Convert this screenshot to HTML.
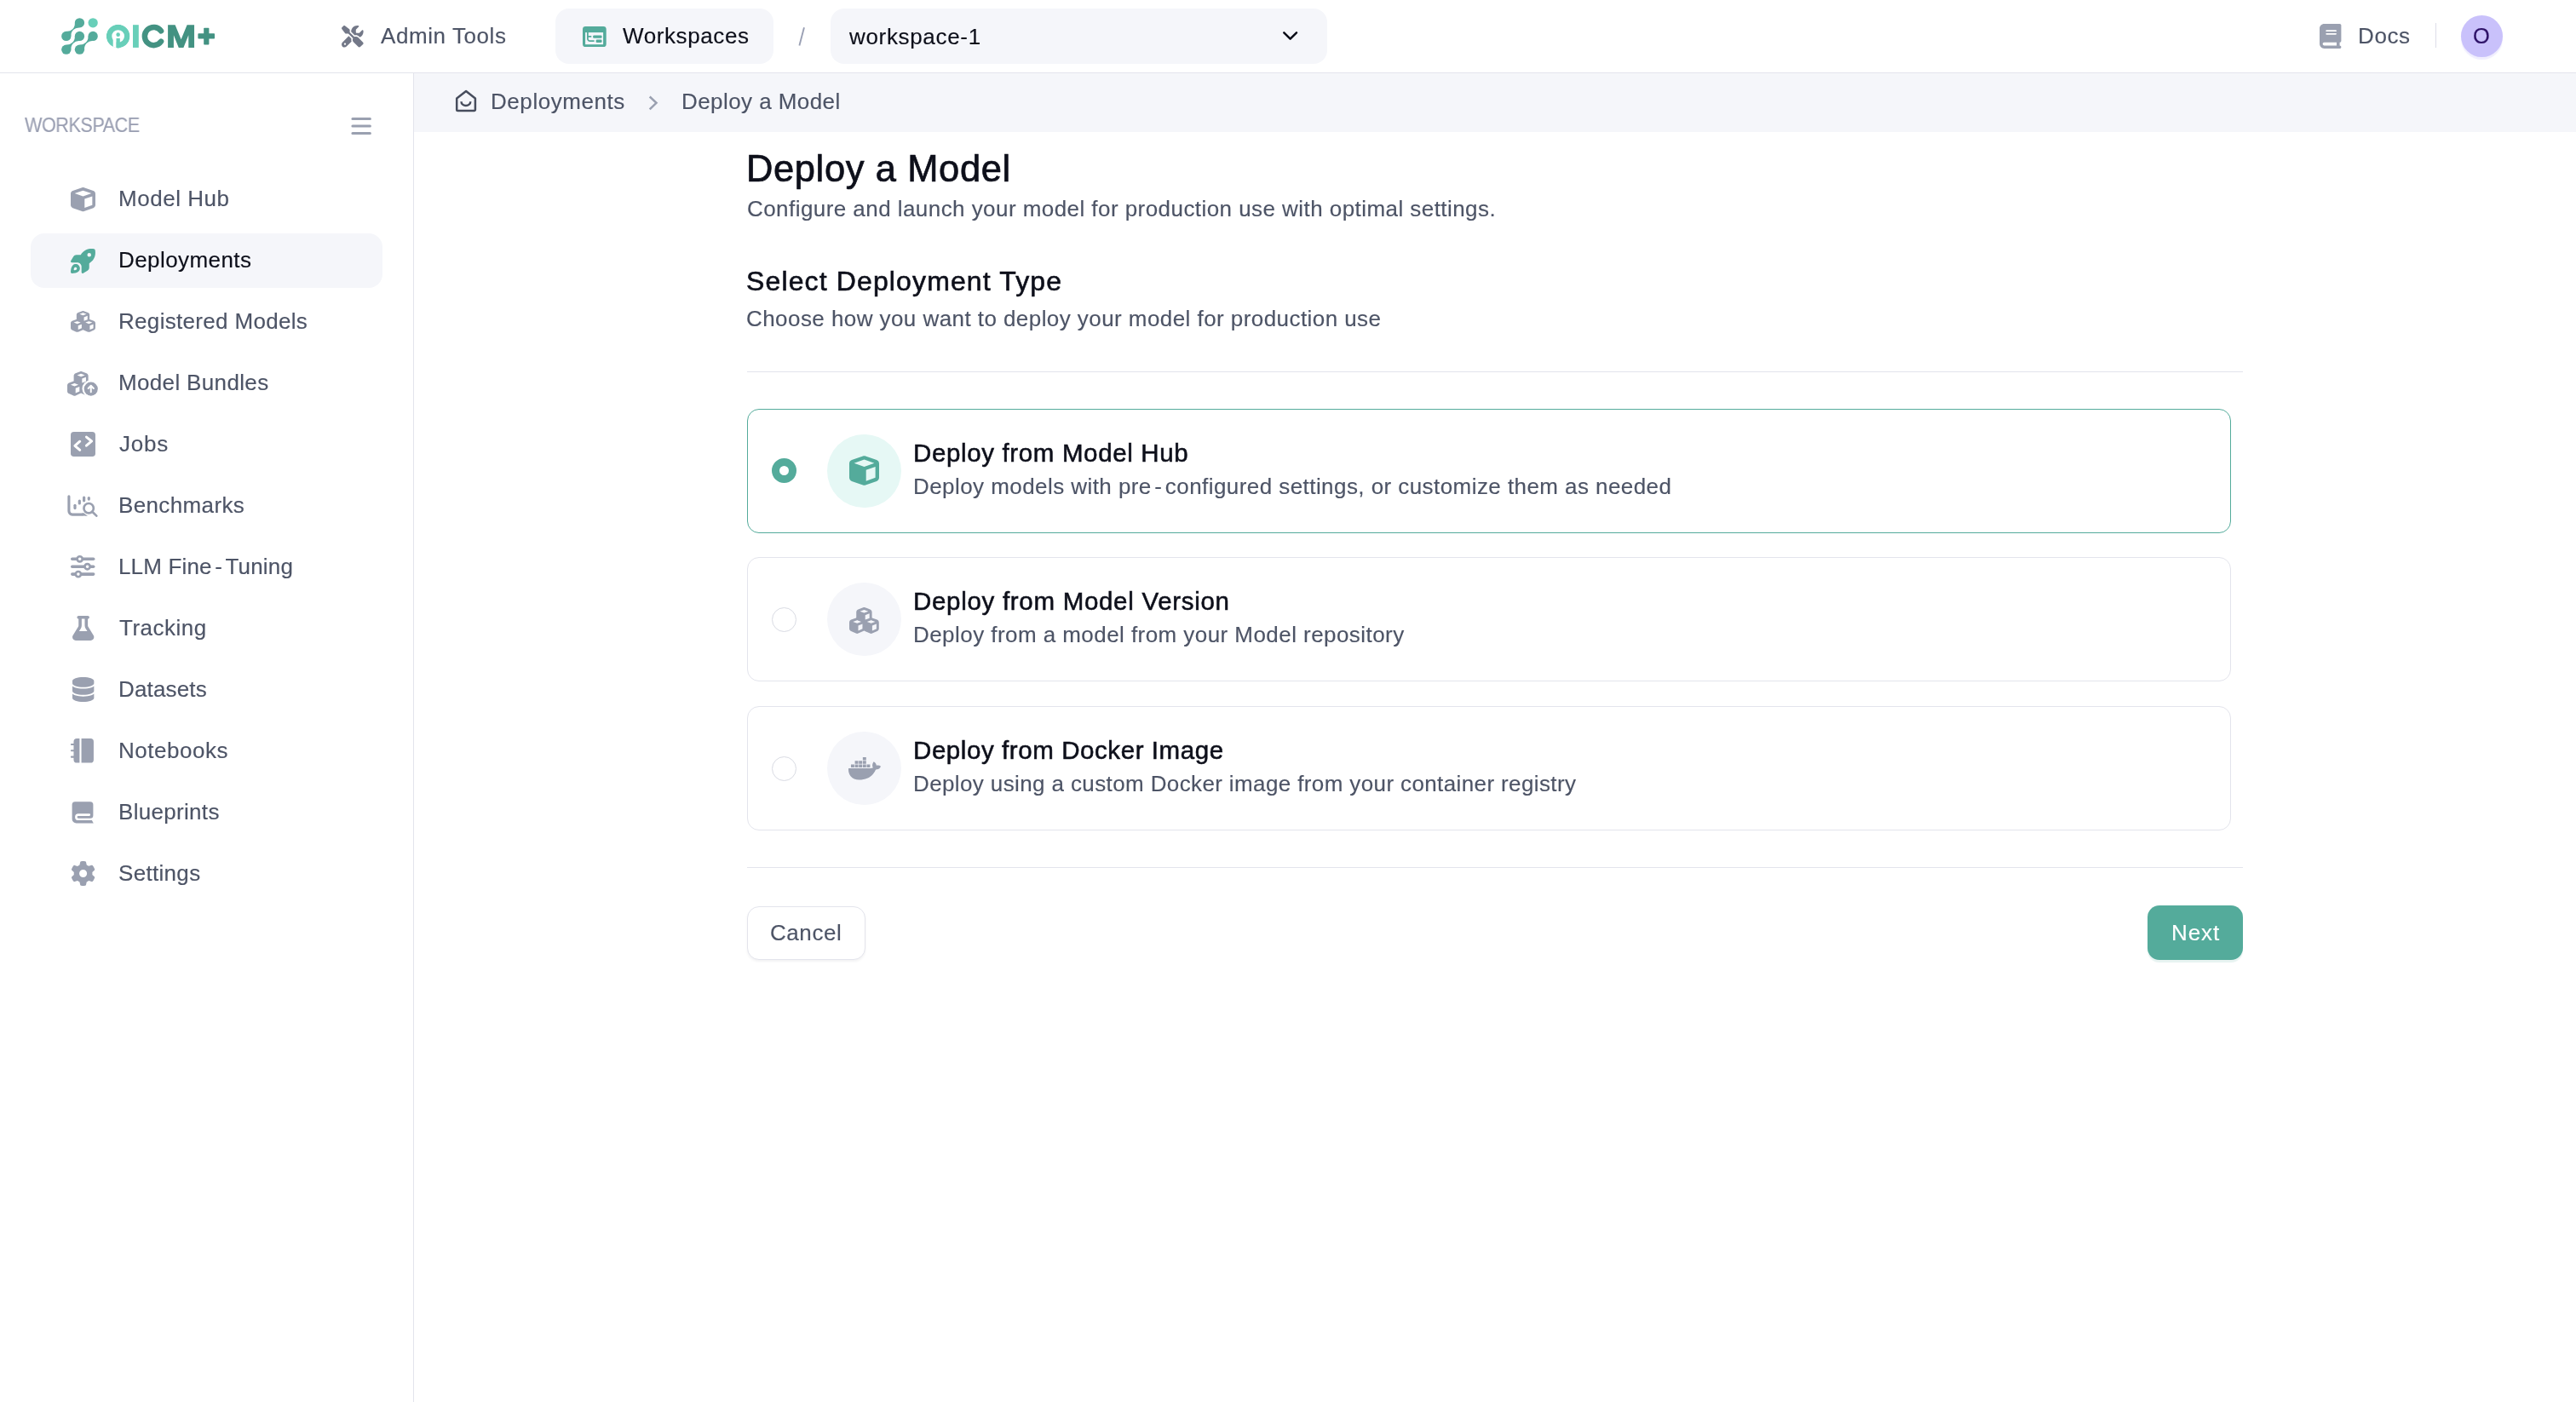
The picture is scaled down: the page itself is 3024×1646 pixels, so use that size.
<!DOCTYPE html>
<html><head><meta charset="utf-8"><title>Deploy a Model</title>
<style>
*{box-sizing:border-box;margin:0;padding:0}
html,body{width:3024px;height:1646px;overflow:hidden;background:#fff}
body{position:relative;font-family:"Liberation Sans",sans-serif}
.t{position:absolute;white-space:nowrap;line-height:1;font-weight:400;will-change:transform;-webkit-text-stroke:0.15px currentColor}
.i{position:absolute;display:block;overflow:visible}
.b{position:absolute}
</style></head>
<body>
<div class="b" style="left:0;top:85px;width:3024px;height:1px;background:#e3e4ec"></div>
<div class="b" style="left:485px;top:86px;width:1px;height:1560px;background:#e3e4ec"></div>
<div class="b" style="left:486px;top:86px;width:2538px;height:69px;background:#f5f6fa"></div>
<div class="b" style="left:652px;top:10px;width:256px;height:65px;border-radius:16px;background:#f5f6fa"></div>
<div class="b" style="left:975px;top:10px;width:583px;height:65px;border-radius:16px;background:#f5f6fa"></div>
<div class="b" style="left:2859px;top:27px;width:1px;height:29px;background:#dddee8"></div>
<div class="b" style="left:2889px;top:18px;width:49px;height:49px;border-radius:50%;background:#c9c1fb;box-shadow:0 3px 1px rgba(201,193,251,0.28)"></div>
<div class="b" style="left:36px;top:274px;width:413px;height:64px;border-radius:16px;background:#f5f6fa"></div>
<div class="b" style="left:877px;top:436px;width:1756px;height:1px;background:#e3e4ec"></div>
<div class="b" style="left:877px;top:1018px;width:1756px;height:1px;background:#e3e4ec"></div>
<div class="b" style="left:877px;top:480px;width:1742px;height:146px;border-radius:14px;border:1px solid #54ab9b;background:#fff"></div>
<div class="b" style="left:971px;top:509.5px;width:87px;height:86.7px;border-radius:50%;background:#e6f8f5"></div>
<div class="b" style="left:906px;top:538px;width:29px;height:29px;border-radius:50%;background:#fff;border:9.6px solid #54ab9b"></div>
<div class="b" style="left:877px;top:654px;width:1742px;height:146px;border-radius:14px;border:1px solid #e3e4ec;background:#fff"></div>
<div class="b" style="left:971px;top:683.5px;width:87px;height:86.7px;border-radius:50%;background:#f5f6fa"></div>
<div class="b" style="left:906px;top:712.5px;width:29px;height:29px;border-radius:50%;background:#fff;border:1px solid #d9dbe3"></div>
<div class="b" style="left:877px;top:829px;width:1742px;height:146px;border-radius:14px;border:1px solid #e3e4ec;background:#fff"></div>
<div class="b" style="left:971px;top:858.5px;width:87px;height:86.7px;border-radius:50%;background:#f5f6fa"></div>
<div class="b" style="left:906px;top:887.5px;width:29px;height:29px;border-radius:50%;background:#fff;border:1px solid #d9dbe3"></div>
<div class="b" style="left:877px;top:1064px;width:139px;height:63px;border-radius:14px;border:1px solid #e3e4ec;background:#fff;box-shadow:0 2px 3px rgba(16,24,40,0.05)"></div>
<div class="b" style="left:2521px;top:1063px;width:112px;height:64px;border-radius:14px;background:#54ab9b;box-shadow:0 3px 1px rgba(84,171,155,0.14)"></div>
<svg class="i" style="left:0px;top:0px" width="300" height="85" viewBox="0 0 300 85" ><circle cx="93.45" cy="26.8" r="5.65" fill="#54ab9b"/><circle cx="109.15" cy="26.8" r="5.65" fill="#68cfb9"/><circle cx="77.8" cy="42.45" r="5.65" fill="#54ab9b"/><circle cx="93.45" cy="42.45" r="5.65" fill="#54ab9b"/><circle cx="109.15" cy="42.45" r="5.65" fill="#54ab9b"/><circle cx="77.8" cy="58.15" r="5.65" fill="#54ab9b"/><circle cx="93.45" cy="58.15" r="5.65" fill="#54ab9b"/><path fill="#54ab9b" d="M87.81 27.18 A9.04 9.04 0 0 1 78.18 36.81 L83.44 42.07 A9.04 9.04 0 0 1 93.07 32.44 Z"/><path fill="#54ab9b" d="M87.81 42.84 A9.08 9.08 0 0 1 78.17 52.51 L83.44 57.76 A9.08 9.08 0 0 1 93.08 48.09 Z"/><path fill="#54ab9b" d="M103.51 42.82 A9.12 9.12 0 0 1 93.82 52.51 L99.09 57.78 A9.12 9.12 0 0 1 108.78 48.09 Z"/><defs><clipPath id="ac"><circle cx="138.65" cy="42.55" r="13.85"/></clipPath></defs><g clip-path="url(#ac)"><circle cx="138.65" cy="42.55" r="10.6" fill="none" stroke="#68cfb9" stroke-width="6.5"/><rect x="132.7" y="45" width="3.9" height="13" fill="#fff"/><rect x="136.5" y="45" width="4.3" height="13" fill="#68cfb9"/></g><circle cx="138.65" cy="40.65" r="2.3" fill="#68cfb9"/><rect x="156" y="29.2" width="6.8" height="26.7" fill="#68cfb9"/><path d="M189.08 36.39 A10.6 10.6 0 1 0 189.08 48.71" fill="none" stroke="#439282" stroke-width="6.5" stroke-linecap="round"/><path fill="#439282" d="M197.1 29.2 H205.6 L212.6 46.2 L219.6 29.2 H228.05 V55.9 H221.3 V41.3 L215.4 55.9 H209.8 L203.9 41.3 V55.9 H197.1 Z"/><rect x="232.4" y="39.3" width="19.6" height="6.2" rx="0.8" fill="#439282"/><rect x="239.2" y="32.8" width="6.2" height="19.8" rx="0.8" fill="#439282"/></svg>
<svg class="i" style="left:401.3px;top:30.1px" width="25.6" height="25.6" viewBox="0 0 512 512" ><path fill="#737888" d="M78.600 5C69.100-2.400 55.600-1.500 47 7L7 47c-8.500 8.500-9.400 22-2.100 31.600l80 104c4.500 5.900 11.600 9.400 19 9.400h54.100l109 109c-14.700 29-10 65.400 14.300 89.600l112 112c12.500 12.500 32.800 12.500 45.300 0l64-64c12.500-12.500 12.500-32.800 0-45.300l-112-112c-24.200-24.200-60.600-29-89.600-14.300l-109-109V104c0-7.500-3.500-14.500-9.400-19L78.600 5zM19.900 396.100C7.200 408.800 0 426.100 0 444.100C0 481.600 30.400 512 67.900 512c18 0 35.300-7.200 48-19.900L233.700 374.300c-7.800-20.900-9-43.600-3.600-65.100l-61.700-61.700L19.900 396.100zM512 144c0-10.500-1.100-20.700-3.200-30.500c-2.400-11.200-16.100-14.100-24.200-6l-63.900 63.900c-3 3-7.100 4.700-11.300 4.700H352c-8.800 0-16-7.200-16-16V102.600c0-4.200 1.700-8.300 4.700-11.300l63.900-63.900c8.100-8.100 5.200-21.800-6-24.200C388.700 1.100 378.500 0 368 0C288.500 0 224 64.500 224 144l0 .8 85.300 85.300c36-9.100 75.800 .5 104 28.700L429 274.500c49-23 83-72.800 83-130.500zM56 432a24 24 0 1 1 48 0 24 24 0 1 1 -48 0z"/></svg>
<svg class="i" style="left:684px;top:30.5px" width="27.7" height="24.1" viewBox="0 0 27.7 24.1" ><rect width="27.7" height="24.1" rx="3.4" fill="#54ab9b"/><rect x="3.1" y="7.1" width="21" height="14.1" fill="#f5f6fa"/><path d="M5.9 7.1 V14.6 a2.65 2.65 0 0 0 2.65 2.65 H13.6 M5.9 12 H10.3" fill="none" stroke="#54ab9b" stroke-width="1.75"/><rect x="12.1" y="10.4" width="10.5" height="3.4" rx="1.4" fill="#54ab9b"/><rect x="15.6" y="15.6" width="7" height="3.5" rx="1.4" fill="#54ab9b"/></svg>
<svg class="i" style="left:2723.4px;top:28.4px" width="25.4" height="29" viewBox="0 0 448 512" ><path fill="#9aa0b0" d="M96 0C43 0 0 43 0 96V416c0 53 43 96 96 96H384h32c17.700 0 32-14.300 32-32s-14.300-32-32-32V384c17.700 0 32-14.300 32-32V32c0-17.700-14.300-32-32-32H384 96zm0 384H352v64H96c-17.700 0-32-14.300-32-32s14.300-32 32-32zm32-240c0-8.800 7.200-16 16-16H336c8.800 0 16 7.200 16 16s-7.200 16-16 16H144c-8.800 0-16-7.200-16-16zm16 48H336c8.800 0 16 7.200 16 16s-7.200 16-16 16H144c-8.800 0-16-7.200-16-16s7.200-16 16-16z"/></svg>
<svg class="i" style="left:534px;top:104px" width="26" height="28" viewBox="0 0 26 28" ><path d="M2.2 11.4 L13.1 3 L23.9 11.4 V24.8 a1.25 1.25 0 0 1 -1.25 1.25 H3.45 a1.25 1.25 0 0 1 -1.25 -1.25 Z" fill="none" stroke="#474d5d" stroke-width="2.5" stroke-linejoin="round"/><path d="M7.5 15.3 A5.4 4.7 0 0 0 18.3 15.3" fill="none" stroke="#474d5d" stroke-width="2.5"/></svg>
<svg class="i" style="left:930px;top:28px" width="22" height="30" viewBox="0 0 22 30" ><path d="M13.97 4.3 L8.4 25.5" stroke="#9aa0b4" stroke-width="1.9"/></svg>
<svg class="i" style="left:755px;top:108px" width="24" height="26" viewBox="0 0 24 26" ><path d="M7.7 5.5 L15.5 12.8 L7.7 20.3" fill="none" stroke="#9aa0b0" stroke-width="2.5"/></svg>
<svg class="i" style="left:1500px;top:30px" width="30" height="24" viewBox="0 0 30 24" ><path d="M7.3 8.3 L14.65 15.6 L22 8.3" fill="none" stroke="#0a0c16" stroke-width="2.5" stroke-linecap="round" stroke-linejoin="round"/></svg>
<svg class="i" style="left:410px;top:136px" width="28" height="24" viewBox="0 0 28 24" ><path d="M3.9 3.5 H24.4 M3.9 12.1 H24.4 M3.9 20.6 H24.4" stroke="#9aa0b0" stroke-width="3" stroke-linecap="round"/></svg>
<svg class="i" style="left:997px;top:535.3px" width="35" height="35" viewBox="0 0 512 512" ><path fill="#54ab9b" d="M234.5 5.7c13.900-5 29.100-5 43.100 0l192 68.600C495 83.400 512 107.500 512 134.600V377.400c0 27-17 51.200-42.500 60.300l-192 68.600c-13.900 5-29.100 5-43.100 0l-192-68.600C17 428.600 0 404.500 0 377.400V134.600c0-27 17-51.200 42.500-60.300l192-68.600zM256 66L82.300 128 256 190l173.700-62L256 66zm32 368.600l160-57.100v-188L288 246.600v188z"/></svg>
<svg class="i" style="left:997.2px;top:712.5px" width="34.8" height="30.9" viewBox="0 0 576 512" ><path fill="#9aa0b0" d="M290.800 48.600l78.400 29.700L288 109.500 206.800 78.300l78.400-29.700c1.800-.7 3.800-.7 5.700 0zM136 92.500V204.700c-1.300 .4-2.600 .8-3.900 1.300l-96 36.400C14.400 250.600 0 271.500 0 294.700V413.900c0 22.200 13.100 42.300 33.500 51.300l96 42.200c14.400 6.300 30.700 6.300 45.100 0L288 457.500l113.500 49.900c14.400 6.300 30.700 6.300 45.100 0l96-42.200c20.300-8.900 33.500-29.100 33.500-51.300V294.700c0-23.300-14.400-44.100-36.100-52.400l-96-36.400c-1.300-.5-2.600-.9-3.900-1.300V92.500c0-23.300-14.400-44.100-36.100-52.400l-96-36.400c-12.800-4.800-26.900-4.800-39.700 0l-96 36.400C150.400 48.400 136 69.300 136 92.500zM392 210.600l-82.400 31.200V152.600L392 121v89.600zM154.800 250.900l78.400 29.700L152 311.700 70.800 280.600l78.400-29.700c1.800-.7 3.800-.7 5.700 0zm18.800 204.400V354.800L256 323.200v95.900l-82.400 36.200zM421.200 250.900c1.800-.7 3.800-.7 5.700 0l78.400 29.700L424 311.700l-81.200-31.100 78.400-29.700zM523.200 421.200l-77.600 34.100V354.800L528 323.200v90.700c0 3.200-1.900 6-4.800 7.300z"/></svg>
<svg class="i" style="left:996px;top:887.0px" width="38" height="30.4" viewBox="0 0 640 512" ><path fill="#9aa0b0" d="M349.900 236.300h-66.100v-59.400h66.100v59.400zm0-204.300h-66.100v60.700h66.100V32zm78.200 144.800H362v59.400h66.100v-59.400zm-156.300-72.100h-66.100v60.100h66.100v-60.100zm78.100 0h-66.100v60.100h66.100v-60.100zm276.800 100c-14.400-9.700-47.600-13.200-73.100-8.400-3.300-24-16.700-44.900-41.100-63.700l-14-9.300-9.300 14c-18.400 27.800-23.400 73.600-3.700 103.800-8.700 4.700-25.800 11.100-48.400 10.700H2.400c-8.700 50.800 5.800 116.800 44 162.100 37.100 43.900 92.700 66.200 165.400 66.200 157.400 0 273.900-72.500 328.400-204.200 21.400 .4 67.600 .1 91.300-45.200 1.500-2.500 6.600-13.200 8.500-17.100l-13.300-8.900zm-511.100-27.900h-66v59.400h66.100v-59.400zm78.100 0h-66.100v59.400h66.100v-59.400zm78.100 0h-66.100v59.400h66.100v-59.400zm-78.100-72.100h-66.100v60.100h66.100v-60.100z"/></svg>
<svg class="i" style="left:82.91px;top:220.37px" width="28.98" height="28.26" viewBox="0 0 512 512" preserveAspectRatio="none"><path fill="#9aa0b0" d="M234.5 5.7c13.900-5 29.100-5 43.100 0l192 68.600C495 83.400 512 107.500 512 134.600V377.400c0 27-17 51.200-42.500 60.300l-192 68.600c-13.900 5-29.100 5-43.100 0l-192-68.600C17 428.600 0 404.500 0 377.400V134.600c0-27 17-51.200 42.500-60.300l192-68.600zM256 66L82.300 128 256 190l173.700-62L256 66zm32 368.600l160-57.100v-188L288 246.600v188z"/></svg>
<svg class="i" style="left:82.51px;top:291.61px" width="28.98" height="28.98" viewBox="0 0 512 512" ><path fill="#54ab9b" d="M117.800 128H207C286.900-3.700 409.500-8.500 483.900 5.300c11.600 2.200 20.700 11.200 22.800 22.800c13.800 74.400 9 197-122.700 276.900v89.300c0 25.400-13.400 49-35.300 61.900l-88.500 52.500c-7.400 4.400-16.600 4.500-24.100 .2S224 496.700 224 488V373.300c0-47.100-38.200-85.300-85.300-85.300H24c-8.600 0-16.600-4.600-20.900-12.100s-4.200-16.700 .2-24.100l52.500-88.500c13-21.900 36.500-35.300 61.900-35.300zM424 128a40 40 0 1 0 -80 0 40 40 0 1 0 80 0zM166.500 470C132.300 504.300 66 511 28.300 511.900c-16 .4-28.600-12.200-28.200-28.200C1 446 7.700 379.700 42 345.500c34.400-34.400 90.100-34.400 124.500 0s34.400 90.100 0 124.500zm-46.700-36.400c11.400-11.400 11.400-30 0-41.400s-30-11.400-41.400 0c-10.100 10.100-13 28.500-13.700 41.300c-.5 8 5.900 14.300 13.900 13.900c12.800-.7 31.200-3.700 41.300-13.700z"/></svg>
<svg class="i" style="left:82.91px;top:365.37px" width="28.98" height="24.87" viewBox="0 0 576 512" preserveAspectRatio="none"><path fill="#9aa0b0" d="M290.800 48.600l78.400 29.700L288 109.500 206.800 78.300l78.400-29.700c1.800-.7 3.800-.7 5.700 0zM136 92.500V204.700c-1.300 .4-2.600 .8-3.900 1.300l-96 36.400C14.400 250.600 0 271.500 0 294.700V413.900c0 22.200 13.100 42.300 33.500 51.300l96 42.200c14.400 6.300 30.700 6.300 45.100 0L288 457.500l113.500 49.900c14.400 6.300 30.700 6.300 45.100 0l96-42.200c20.300-8.900 33.500-29.100 33.500-51.300V294.700c0-23.300-14.400-44.100-36.100-52.400l-96-36.400c-1.300-.5-2.600-.9-3.900-1.300V92.500c0-23.300-14.400-44.100-36.100-52.400l-96-36.400c-12.800-4.800-26.900-4.800-39.700 0l-96 36.400C150.400 48.400 136 69.300 136 92.500zM392 210.600l-82.400 31.200V152.600L392 121v89.600zM154.800 250.900l78.400 29.700L152 311.700 70.800 280.600l78.400-29.700c1.800-.7 3.800-.7 5.700 0zm18.800 204.400V354.800L256 323.200v95.900l-82.400 36.200zM421.200 250.900c1.800-.7 3.800-.7 5.700 0l78.400 29.700L424 311.700l-81.200-31.100 78.400-29.700zM523.200 421.200l-77.600 34.100V354.800L528 323.200v90.700c0 3.200-1.900 6-4.800 7.300z"/></svg>
<svg class="i" style="left:78.79px;top:435.87px" width="35.81" height="28.67" viewBox="0 0 640 512" ><path fill="#9aa0b0" d="M290.800 48.600l78.400 29.700L288 109.500 206.800 78.300l78.400-29.700c1.800-.7 3.800-.7 5.700 0zM136 92.500V204.700c-1.300 .4-2.600 .8-3.900 1.300l-96 36.400C14.400 250.600 0 271.500 0 294.700V413.900c0 22.200 13.100 42.300 33.500 51.300l96 42.200c14.400 6.300 30.700 6.300 45.100 0L288 457.500l113.500 49.900c14.400 6.300 30.700 6.300 45.100 0l96-42.200c20.300-8.900 33.500-29.100 33.500-51.300V294.700c0-23.300-14.400-44.100-36.100-52.400l-96-36.400c-1.300-.5-2.600-.9-3.900-1.300V92.500c0-23.300-14.400-44.100-36.100-52.400l-96-36.400c-12.800-4.800-26.900-4.800-39.700 0l-96 36.400C150.400 48.400 136 69.300 136 92.500zM392 210.600l-82.400 31.200V152.600L392 121v89.600zM154.800 250.900l78.400 29.700L152 311.700 70.800 280.600l78.400-29.700c1.800-.7 3.800-.7 5.700 0zm18.800 204.400V354.800L256 323.200v95.900l-82.400 36.200zM421.200 250.900c1.800-.7 3.800-.7 5.700 0l78.400 29.700L424 311.700l-81.200-31.100 78.400-29.700zM523.200 421.200l-77.600 34.100V354.800L528 323.200v90.700c0 3.200-1.900 6-4.800 7.300z"/><circle cx="496" cy="368" r="184" fill="#fff"/><circle cx="496" cy="368" r="144" fill="#9aa0b0"/><path d="M496 434 V304 M440 356 L496 300 L552 356" fill="none" stroke="#fff" stroke-width="36" stroke-linecap="round" stroke-linejoin="round"/></svg>
<svg class="i" style="left:82.91px;top:507.01px" width="28.98" height="28.98" viewBox="0 0 28 28" ><rect width="28" height="28" rx="3.6" fill="#9aa0b0"/><path d="M17.83 5.85 L23.77 10.6 L17.83 15.65 M10.38 10.85 L4.72 15.8 L10.38 20.65" fill="none" stroke="#fff" stroke-width="2.9" stroke-linecap="round" stroke-linejoin="round"/></svg>
<svg class="i" style="left:79px;top:579.8px" width="36" height="28" viewBox="0 0 36 28" ><path d="M1.9 2.7 V20.1 a4 4 0 0 0 4 4 H19" fill="none" stroke="#9aa0b0" stroke-width="3.1" stroke-linecap="round"/><path d="M17 22.55 L20.5 25.65 H24 L19.5 22.55 Z" fill="#9aa0b0"/><path d="M9.0 13.299999999999999 V16.599999999999998" stroke="#9aa0b0" stroke-width="3.2" stroke-linecap="round"/><path d="M14.3 8.0 V11.0" stroke="#9aa0b0" stroke-width="3.2" stroke-linecap="round"/><path d="M19.6 4.2 V7.800000000000001" stroke="#9aa0b0" stroke-width="3.2" stroke-linecap="round"/><path d="M25.3 4.6 V6.1" stroke="#9aa0b0" stroke-width="3.2" stroke-linecap="round"/><circle cx="25.15" cy="16.7" r="7.6" fill="#fff"/><circle cx="25.15" cy="16.7" r="5.7" fill="none" stroke="#9aa0b0" stroke-width="2.7"/><path d="M29.3 20.8 L34.3 25.6" stroke="#9aa0b0" stroke-width="2.7" stroke-linecap="round"/></svg>
<svg class="i" style="left:83.17px;top:651.42px" width="28.46" height="28.46" viewBox="0 0 512 512" ><path d="M32 96 H480" stroke="#9aa0b0" stroke-width="64" stroke-linecap="round"/><circle cx="192" cy="96" r="56" fill="#fff" stroke="#9aa0b0" stroke-width="48"/><path d="M32 256 H480" stroke="#9aa0b0" stroke-width="64" stroke-linecap="round"/><circle cx="352" cy="256" r="56" fill="#fff" stroke="#9aa0b0" stroke-width="48"/><path d="M32 416 H480" stroke="#9aa0b0" stroke-width="64" stroke-linecap="round"/><circle cx="160" cy="416" r="56" fill="#fff" stroke="#9aa0b0" stroke-width="48"/></svg>
<svg class="i" style="left:84.92px;top:723.11px" width="25.36" height="28.98" viewBox="0 0 448 512" ><path fill="#9aa0b0" d="M288 0H160 128C110.300 0 96 14.300 96 32s14.300 32 32 32V196.800c0 11.800-3.300 23.500-9.500 33.500L10.300 406.200C3.600 417.200 0 429.700 0 442.600C0 480.900 31.100 512 69.400 512H378.600c38.300 0 69.400-31.100 69.400-69.400c0-12.800-3.600-25.400-10.300-36.400L329.500 230.400c-6.200-10.100-9.500-21.700-9.500-33.500V64c17.700 0 32-14.300 32-32s-14.300-32-32-32H288zM192 196.800V64h64V196.800c0 23.700 6.600 46.900 19 67.100L309.500 320h-171L173 263.900c12.400-20.200 19-43.400 19-67.100z"/></svg>
<svg class="i" style="left:84.62px;top:795.01px" width="25.36" height="28.98" viewBox="0 0 448 512" ><path fill="#9aa0b0" d="M448 80v48c0 44.200-100.300 80-224 80S0 172.200 0 128V80C0 35.800 100.300 0 224 0S448 35.800 448 80zM393.200 214.700c20.800-7.400 39.900-16.900 54.800-28.600V288c0 44.200-100.300 80-224 80S0 332.200 0 288V186.100c14.900 11.800 34 21.200 54.800 28.600C99.700 230.700 159.500 240 224 240s124.300-9.300 169.200-25.300zM0 346.100c14.900 11.800 34 21.200 54.800 28.600C99.700 390.700 159.500 400 224 400s124.300-9.300 169.200-25.300c20.800-7.400 39.900-16.900 54.800-28.600V432c0 44.200-100.300 80-224 80S0 476.200 0 432V346.100z"/></svg>
<svg class="i" style="left:83.22px;top:867.22px" width="28.57" height="28.57" viewBox="0 0 28 28" ><path d="M10.2 0 V28 H7.2 a3.8 3.8 0 0 1 -3.8 -3.8 V3.8 a3.8 3.8 0 0 1 3.8 -3.8 Z" fill="#9aa0b0"/><path d="M12.3 0 H22.8 a3.6 3.6 0 0 1 3.6 3.6 V24.4 a3.6 3.6 0 0 1 -3.6 3.6 H12.3 Z" fill="#9aa0b0"/><rect x="-0.1" y="5.9" width="5" height="2" rx="1" fill="#9aa0b0"/><rect x="-0.1" y="12.95" width="5" height="2" rx="1" fill="#9aa0b0"/><rect x="-0.1" y="20.2" width="5" height="2" rx="1" fill="#9aa0b0"/></svg>
<svg class="i" style="left:83px;top:940px" width="28" height="28" viewBox="0 0 28 28" ><path fill="#9aa0b0" d="M5.1 1.3 H22.9 A3.5 3.5 0 0 1 26.4 4.8 V17.3 A3.5 3.5 0 0 1 22.9 20.8 H9.0 A1.45 1.45 0 0 1 9.0 17.9 H21.8 A1.3 1.3 0 0 0 21.8 15.3 H9.0 A3.9 3.9 0 0 0 9.0 23.1 H24.9 L26.8 26.4 H6.6 A5 5 0 0 1 1.6 21.4 V4.8 A3.5 3.5 0 0 1 5.1 1.3 Z"/></svg>
<svg class="i" style="left:82.86px;top:1011.21px" width="29.19" height="28.98" viewBox="0 0 512 512" ><path fill="#9aa0b0" d="M495.900 166.600c3.200 8.700 .5 18.400-6.400 24.600l-43.300 39.400c1.100 8.300 1.700 16.800 1.700 25.400s-.6 17.100-1.700 25.400l43.300 39.400c6.900 6.200 9.600 15.900 6.400 24.600c-4.400 11.900-9.700 23.300-15.800 34.300l-4.700 8.100c-6.600 11-14 21.400-22.100 31.200c-5.900 7.200-15.700 9.600-24.500 6.800l-55.700-17.700c-13.400 10.300-28.200 18.900-44 25.400l-12.500 57.100c-2 9.100-9 16.300-18.200 17.800c-13.800 2.300-28 3.500-42.500 3.500s-28.700-1.200-42.500-3.500c-9.200-1.500-16.200-8.700-18.200-17.800l-12.500-57.100c-15.800-6.500-30.600-15.100-44-25.400L83.100 425.900c-8.800 2.800-18.600 .3-24.500-6.800c-8.100-9.800-15.500-20.200-22.100-31.200l-4.700-8.100c-6.100-11-11.400-22.400-15.800-34.300c-3.200-8.700-.5-18.400 6.400-24.600l43.300-39.400C64.600 273.100 64 264.600 64 256s.6-17.100 1.700-25.400L22.400 191.200c-6.900-6.200-9.600-15.900-6.400-24.600c4.400-11.900 9.700-23.300 15.800-34.300l4.700-8.100c6.600-11 14-21.400 22.100-31.200c5.900-7.200 15.700-9.600 24.500-6.800l55.700 17.700c13.400-10.300 28.200-18.900 44-25.400l12.500-57.100c2-9.100 9-16.300 18.200-17.800C227.300 1.200 241.500 0 256 0s28.700 1.200 42.500 3.500c9.200 1.500 16.200 8.700 18.200 17.800l12.500 57.100c15.800 6.500 30.600 15.100 44 25.400l55.700-17.700c8.800-2.800 18.600-.3 24.500 6.800c8.100 9.800 15.500 20.200 22.100 31.200l4.700 8.100c6.100 11 11.400 22.400 15.800 34.300zM256 336a80 80 0 1 0 0-160 80 80 0 1 0 0 160z"/></svg>
<span class="t" id="t_admin" style="left:446.60px;top:28.89px;font-size:26px;color:#4d5466;letter-spacing:0.580px;">Admin Tools</span>
<span class="t" id="t_ws" style="left:731.20px;top:28.99px;font-size:26px;color:#0d0f1a;letter-spacing:0.600px;">Workspaces</span>
<span class="t" id="t_wsel" style="left:997.40px;top:29.89px;font-size:26px;color:#0d0f1a;letter-spacing:0.670px;">workspace-1</span>
<span class="t" id="t_docs" style="left:2767.60px;top:28.89px;font-size:26px;color:#4d5466;letter-spacing:0.599px;">Docs</span>
<span class="t" id="t_av" style="left:2903.40px;top:30.41px;font-size:25.5px;color:#2d1167;letter-spacing:0.000px;">O</span>
<span class="t" id="t_wslabel" style="left:29.20px;top:136.23px;font-size:23px;color:#9a9fb2;letter-spacing:-0.500px;transform:scaleX(0.94);transform-origin:left center;">WORKSPACE</span>
<span class="t" id="t_bc1" style="left:575.50px;top:106.39px;font-size:26px;color:#4d5466;letter-spacing:0.560px;">Deployments</span>
<span class="t" id="t_bc2" style="left:799.60px;top:106.39px;font-size:26px;color:#4d5466;letter-spacing:0.430px;">Deploy a Model</span>
<span class="t" id="t_title" style="left:875.60px;top:177.08px;font-size:43.5px;color:#0d0f1a;letter-spacing:0.608px;-webkit-text-stroke:0.7px #0d0f1a;">Deploy a Model</span>
<span class="t" id="t_sub" style="left:876.70px;top:232.09px;font-size:26px;color:#4d5466;letter-spacing:0.441px;">Configure and launch your model for production use with optimal settings.</span>
<span class="t" id="t_sel" style="left:876.00px;top:314.31px;font-size:32px;color:#0d0f1a;letter-spacing:1.132px;-webkit-text-stroke:0.6px #0d0f1a;">Select Deployment Type</span>
<span class="t" id="t_choose" style="left:876.00px;top:360.59px;font-size:26px;color:#4d5466;letter-spacing:0.435px;">Choose how you want to deploy your model for production use</span>
<span class="t" id="t_c1t" style="left:1071.80px;top:517.33px;font-size:29.5px;color:#0d0f1a;letter-spacing:0.640px;-webkit-text-stroke:0.55px #0d0f1a;">Deploy from Model Hub</span>
<span class="t" id="t_c1d" style="left:1071.80px;top:558.49px;font-size:26px;color:#4d5466;letter-spacing:0.433px;">Deploy models with pre<span style="margin:0 3.5px">-</span>configured settings, or customize them as needed</span>
<span class="t" id="t_c2t" style="left:1071.80px;top:691.33px;font-size:29.5px;color:#0d0f1a;letter-spacing:0.701px;-webkit-text-stroke:0.55px #0d0f1a;">Deploy from Model Version</span>
<span class="t" id="t_c2d" style="left:1071.80px;top:732.49px;font-size:26px;color:#4d5466;letter-spacing:0.441px;">Deploy from a model from your Model repository</span>
<span class="t" id="t_c3t" style="left:1071.80px;top:865.63px;font-size:29.5px;color:#0d0f1a;letter-spacing:0.576px;-webkit-text-stroke:0.55px #0d0f1a;">Deploy from Docker Image</span>
<span class="t" id="t_c3d" style="left:1071.80px;top:906.89px;font-size:26px;color:#4d5466;letter-spacing:0.381px;">Deploy using a custom Docker image from your container registry</span>
<span class="t" id="t_cancel" style="left:904.10px;top:1081.99px;font-size:26px;color:#4d5466;letter-spacing:0.560px;">Cancel</span>
<span class="t" id="t_next" style="left:2548.60px;top:1081.89px;font-size:26px;color:#ffffff;letter-spacing:0.932px;">Next</span>
<span class="t" id="t_s0" style="left:139.10px;top:220.19px;font-size:26px;color:#4d5466;letter-spacing:0.528px;">Model Hub</span>
<span class="t" id="t_s1" style="left:139.10px;top:292.19px;font-size:26px;color:#0d0f1a;letter-spacing:0.420px;">Deployments</span>
<span class="t" id="t_s2" style="left:139.10px;top:364.19px;font-size:26px;color:#4d5466;letter-spacing:0.315px;">Registered Models</span>
<span class="t" id="t_s3" style="left:139.10px;top:436.19px;font-size:26px;color:#4d5466;letter-spacing:0.347px;">Model Bundles</span>
<span class="t" id="t_s4" style="left:140.40px;top:508.19px;font-size:26px;color:#4d5466;letter-spacing:0.768px;">Jobs</span>
<span class="t" id="t_s5" style="left:139.10px;top:580.19px;font-size:26px;color:#4d5466;letter-spacing:0.365px;">Benchmarks</span>
<span class="t" id="t_s6" style="left:139.10px;top:652.19px;font-size:26px;color:#4d5466;letter-spacing:0.165px;">LLM Fine<span style="margin:0 3.5px">-</span>Tuning</span>
<span class="t" id="t_s7" style="left:140.40px;top:724.19px;font-size:26px;color:#4d5466;letter-spacing:0.493px;">Tracking</span>
<span class="t" id="t_s8" style="left:139.10px;top:796.19px;font-size:26px;color:#4d5466;letter-spacing:0.165px;">Datasets</span>
<span class="t" id="t_s9" style="left:139.10px;top:868.19px;font-size:26px;color:#4d5466;letter-spacing:0.528px;">Notebooks</span>
<span class="t" id="t_s10" style="left:139.10px;top:940.19px;font-size:26px;color:#4d5466;letter-spacing:0.309px;">Blueprints</span>
<span class="t" id="t_s11" style="left:139.40px;top:1012.19px;font-size:26px;color:#4d5466;letter-spacing:0.314px;">Settings</span>
</body></html>
